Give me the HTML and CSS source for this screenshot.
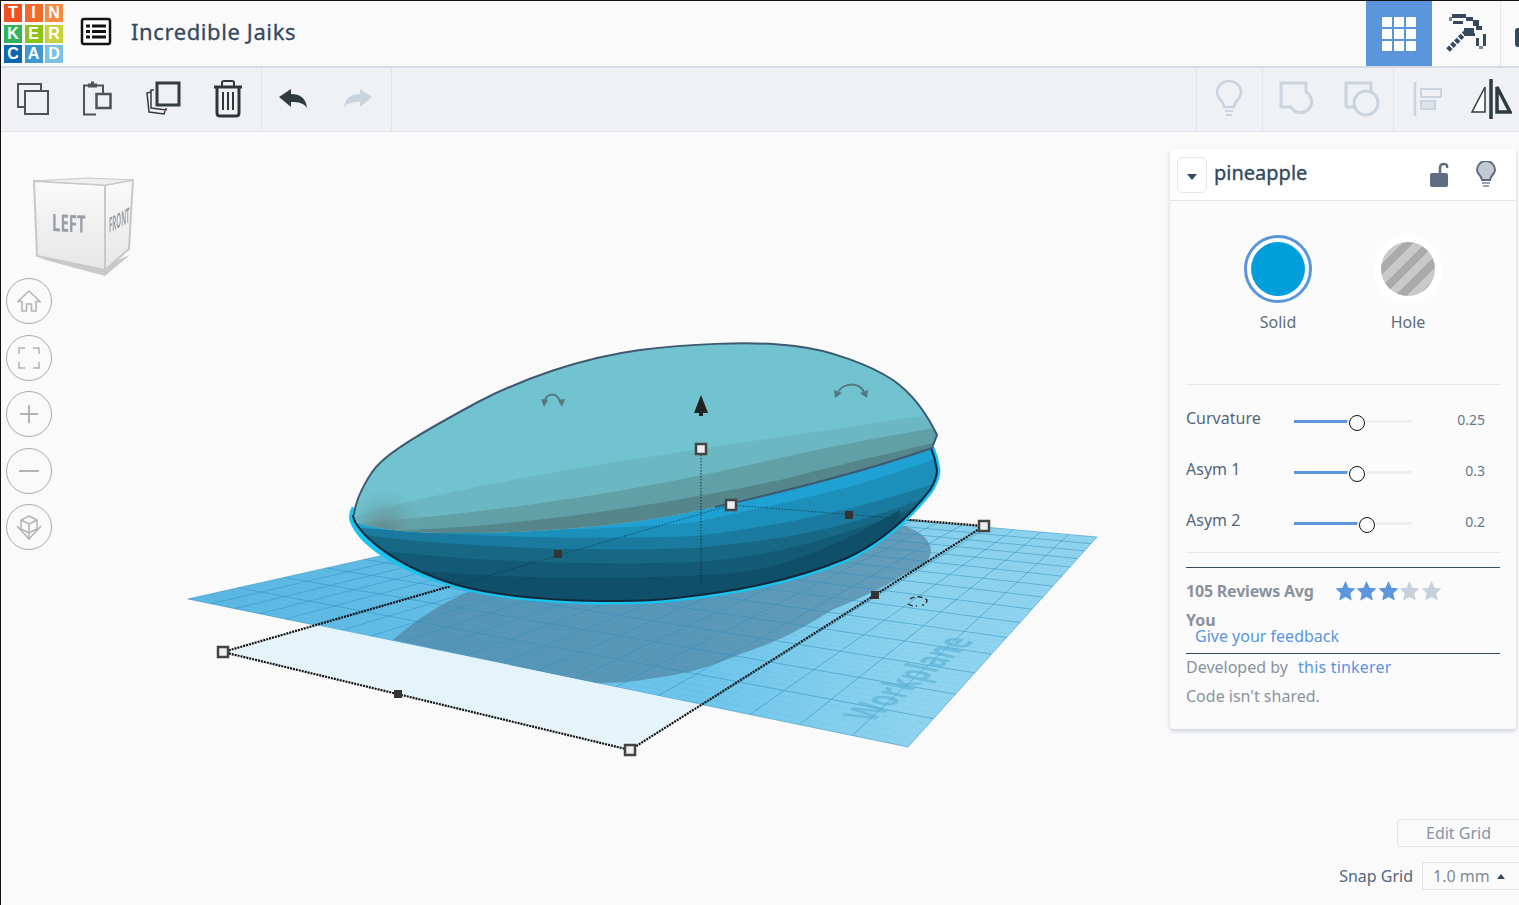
FILE: index.html
```html
<!DOCTYPE html>
<html lang="en">
<head>
	<meta charset="UTF-8">
	<title>Incredible Jaiks</title>
	<link rel="stylesheet" href="styles.css">
</head>
<body>
	<header class="topbar">
		<div class="logo">
			<span class="t1">T</span><span class="t2">I</span><span class="t3">N</span>
			<span class="t4">K</span><span class="t5">E</span><span class="t6">R</span>
			<span class="t7">C</span><span class="t8">A</span><span class="t9">D</span>
		</div>
		<svg class="listIcon" width="32" height="30" viewBox="0 0 32 30">
			<rect x="2" y="2" width="28" height="25" rx="2" fill="#fff" stroke="#111" stroke-width="2.5"/>
			<path d="M6 9h4M6 14.500h4M6 20h4M12 9h14M12 14.500h14M12 20h14" stroke="#111" stroke-width="3" fill="none"/>
		</svg>
		<h1 class="title">Incredible Jaiks</h1>
		<div class="topRight">
			<div class="gridTile">
				<svg width="34" height="34" viewBox="0 0 34 34" fill="#fff">
					<rect width="10" height="10" rx="1"/><rect x="12" width="10" height="10"/><rect x="24" width="10" height="10" rx="1"/>
					<rect y="12" width="10" height="10"/><rect x="12" y="12" width="10" height="10"/><rect x="24" y="12" width="10" height="10"/>
					<rect y="24" width="10" height="10" rx="1"/><rect x="12" y="24" width="10" height="10"/><rect x="24" y="24" width="10" height="10" rx="1"/>
				</svg>
			</div>
			<div class="pickTile">
				<svg width="60" height="55" viewBox="0 0 60 55" fill="#34495e">
					<rect x="13" y="8" width="14" height="4"/><rect x="10" y="11" width="3" height="4" fill="#7b8a9a"/>
					<rect x="14" y="15" width="10" height="3"/><rect x="27" y="11" width="7" height="4"/>
					<rect x="34" y="14" width="6" height="6"/><rect x="37" y="20" width="6" height="4"/>
					<rect x="44" y="28" width="3" height="12"/><rect x="37" y="32" width="3" height="8"/>
					<rect x="40" y="40" width="4" height="3" fill="#7b8a9a"/>
					<rect x="25" y="22" width="10" height="8"/><rect x="32" y="27" width="4" height="3"/>
					<path d="M9 44L27 26" stroke="#34495e" stroke-width="5" stroke-dasharray="4 1.500" fill="none"/>
				</svg>
			</div>
			<div class="edgeIcon"></div>
		</div>
	</header>

	<nav class="toolbar">
		<div class="toolGroup nudge">
			<button class="tool">
				<svg width="34" height="34" viewBox="0 0 34 34" fill="none" stroke="#4b5559" stroke-width="2">
					<path d="M25 9V2H2v23h7"/><rect x="9" y="9" width="23" height="23"/>
				</svg>
			</button>
			<button class="tool">
				<svg width="34" height="36" viewBox="0 0 34 36" fill="none" stroke="#4b5559" stroke-width="2">
					<path d="M15 33.500H3V4.500h4M16 4.500h6V12"/><path d="M7 2.500h3v-2h3v2h3v4H7z" fill="#4b5559" stroke="none"/><rect x="15.500" y="13" width="14" height="14" stroke-width="2.500"/>
				</svg>
			</button>
			<button class="tool">
				<svg width="38" height="38" viewBox="0 0 38 38" fill="none" stroke="#333c40">
					<rect x="13" y="3" width="22" height="22" stroke-width="3"/>
					<path d="M10 10H7v18l15 2v-2M7 12l-4 1 2 19 15 2 1-3" stroke-width="1.500"/>
				</svg>
			</button>
			<button class="tool">
				<svg width="30" height="38" viewBox="0 0 30 38" fill="none" stroke="#2f373b" stroke-width="2.500">
					<path d="M1 7h28" stroke-width="3"/><path d="M9 6V3q0-2 2-2h8q2 0 2 2v3" stroke-width="2"/>
					<path d="M4 7v26q0 3 3 3h16q3 0 3-3V7" stroke-width="3"/><path d="M10 12v18M15 12v18M20 12v18" stroke-width="2"/>
				</svg>
			</button>
		</div>
		<div class="toolGroup nudge narrow">
			<button class="tool">
				<svg width="30" height="20" viewBox="0 0 30 20"><path d="M1 8L13 0v5c9 0 15 4 16 14-3-5-8-6-16-6v5z" fill="#2f3c40"/></svg>
			</button>
			<button class="tool">
				<svg width="30" height="20" viewBox="0 0 30 20"><path d="M29 8L17 0v5C8 5 2 9 1 19c3-5 8-6 16-6v5z" fill="#c9d4de"/></svg>
			</button>
		</div>
		<div class="toolGroup groupRight">
			<button class="tool nudge1">
				<svg width="28" height="38" viewBox="0 0 28 38" fill="none" stroke="#c9d4de" stroke-width="2.500">
					<path d="M9 27c0-6-7-8-7-15a12 11 0 0 1 24 0c0 7-7 9-7 15z"/><path d="M10 31h8M11 35h6" stroke-width="2"/>
				</svg>
			</button>
		</div>
		<div class="toolGroup">
			<button class="tool">
				<svg class="shift1" width="36" height="36" viewBox="0 0 36 36" fill="none" stroke="#c9d4de" stroke-width="3">
					<path d="M2 26V2h25v9a11 11 0 1 1-15 15z"/>
				</svg>
			</button>
			<button class="tool">
				<svg class="shift1" width="36" height="36" viewBox="0 0 36 36" fill="none" stroke="#c9d4de" stroke-width="3">
					<path d="M2 26V2h25v9M12 26H2"/><circle cx="22" cy="22" r="12"/>
				</svg>
			</button>
		</div>
		<div class="toolGroup noLine">
			<button class="tool">
				<svg class="shift1" width="30" height="36" viewBox="0 0 30 36" fill="none" stroke="#c9d4de" stroke-width="2">
					<path d="M2 1v34" stroke-width="2.500"/><rect x="8" y="8" width="20" height="8"/><rect x="8" y="20" width="14" height="8" fill="#dbe2e9"/>
				</svg>
			</button>
			<button class="tool nudge1">
				<svg width="42" height="42" viewBox="0 0 42 42" fill="none" stroke="#2f3c40">
					<path d="M21 1v40" stroke-width="3.500"/><path d="M15 9v25H2z" stroke-width="1.500" fill="#fff"/><path d="M27 9v25h13z" stroke-width="3.500"/>
				</svg>
			</button>
		</div>
	</nav>

	<main class="canvas">
		<svg class="scene" viewBox="1 132 1518 772" width="1518" height="772">
			<defs>
				<linearGradient id="plate" x1="0" y1="0" x2="1" y2="0">
					<stop offset="0" stop-color="#5db9e4"/>
					<stop offset="0.55" stop-color="#6cc4ea"/>
					<stop offset="0.8" stop-color="#8ed4ef"/>
					<stop offset="1" stop-color="#93d6f0"/>
				</linearGradient>
				<linearGradient id="cubeLeft" x1="0" y1="0" x2="0" y2="1">
					<stop offset="0" stop-color="#fafafa"/>
					<stop offset="1" stop-color="#e6e6e6"/>
				</linearGradient>
				<radialGradient id="tip">
					<stop offset="0" stop-color="#5f8a8c"/>
					<stop offset="0.35" stop-color="#66979a" stop-opacity="0.7"/>
					<stop offset="1" stop-color="#6aa9b2" stop-opacity="0"/>
				</radialGradient>
				<clipPath id="clipTop">
					<path d="M354 515C356 495 372 470 380 463C395 448 430 428 478 402C520 380 580 358 640 350C680 345 750 340 795 346C830 350 870 365 893 380C910 392 925 410 937 435L932 448C880 466 800 488 715 507C670 517 625 524 577 528C540 531 500 533 457 533C420 533 385 531 357 523Z"/>
				</clipPath>
				<clipPath id="clipLow">
					<path d="M353 515C354 530 390 565 457 585C500 597 560 601 617 601C640 601 660 600 676 598C730 592 790 582 847 558C875 545 905 522 930 490C935 482 937 476 937 470C936 463 934 455 931 448L600 500Z"/>
				</clipPath>
			</defs>

			<!-- workplane -->
			<polygon points="188,599 643,497 1097,537 908,747" fill="url(#plate)"/>
			<path d="M393 640C415 620 440 605 465 593L905 526C925 533 934 545 930 556C925 568 915 570 905 574C880 590 855 600 832 610C800 630 775 643 743 653C715 665 685 675 654 678C635 682 615 683 595 683Z" fill="#4f7a96" opacity="0.6"/>
			<g id="gridLines"></g>
			<text class="plateText" transform="matrix(0.63,-0.5,1.45,0.3,873,722)">Workplane</text>

			<!-- selection box -->
			<polygon points="223,652 316,625 702,705 630,750" fill="#e5f4fa"/>
			<g fill="none" stroke="#111" stroke-dasharray="2 1" stroke-width="2.200">
				<path d="M223 652L630 750L984 526"/>
				<path d="M223 652L731 505L984 526"/>
			</g>

			<!-- shape -->
			<path d="M355 508C352 515 352 518 353 520C360 540 390 565 457 585C500 597 560 601 617 601C640 601 660 600 676 598C730 592 790 582 847 558C875 545 905 522 930 490C935 482 937 476 937 470C936 463 934 455 931 448" fill="none" stroke="#19c3ee" stroke-width="7"/>
			<g clip-path="url(#clipLow)">
				<rect x="340" y="440" width="610" height="170" fill="#1fa2d3"/>
				<path d="M340 528C450 532 600 532 696 522C780 503 847 493 945 455V610H340Z" fill="#1c8fbb"/>
				<path d="M340 526C450 537 600 540 696 536C780 525 847 513 945 480V610H340Z" fill="#1a7aa0"/>
				<path d="M340 532C450 548 600 552 696 548C780 540 847 530 945 490V610H340Z" fill="#166885"/>
				<path d="M340 545C450 562 600 566 696 562C770 558 850 535 945 495V610H340Z" fill="#125a76"/>
				<path d="M340 560C450 580 620 582 735 573C780 568 830 550 900 510V610H340Z" fill="#0f4f69"/>
			</g>
			<path d="M353 515C354 530 390 565 457 585C500 597 560 601 617 601C640 601 660 600 676 598C730 592 790 582 847 558C875 545 905 522 930 490C935 482 937 476 937 470C936 463 934 455 931 448" fill="none" stroke="#12283a" stroke-width="2"/>
			<g clip-path="url(#clipTop)">
				<rect x="340" y="330" width="610" height="210" fill="#70c3cf"/>
				<path d="M350 518C440 490 560 470 780 437C830 430 880 423 945 412V540H350Z" fill="#6bb7c2"/>
				<path d="M350 524C460 515 600 500 780 458C810 451 847 443 945 426V540H350Z" fill="#62a0a8"/>
				<path d="M370 531C460 530 600 518 780 480C810 472 847 463 945 440V540H370Z" fill="#55868c"/>
				<circle cx="385" cy="530" r="40" fill="url(#tip)"/>
			</g>
			<path d="M354 515C356 495 372 470 380 463C395 448 430 428 478 402C520 380 580 358 640 350C680 345 750 340 795 346C830 350 870 365 893 380C910 392 925 410 937 435L932 448C880 466 800 488 715 507" fill="none" stroke="#3d5a70" stroke-width="2"/>

			<!-- helpers over the shape -->
			<g fill="none" stroke="#14303f" stroke-dasharray="1.500 1.500">
				<path d="M701 449V583"/>
				<path d="M457 585L731 505L905 519" stroke-opacity="0.7"/>
			</g>
			<path d="M701 395L708 413H703V416H699V413H694Z" fill="#222"/>
			<g fill="none" stroke="#56777f" stroke-width="2">
				<path d="M544 404C545 392 558 391 561 404"/>
				<path d="M837 394C842 382 860 381 865 394"/>
				<path d="M910 599C914 596 922 596 927 600C927 603 925 605 922 605M908 604C911 606 914 606 917 606" stroke="#333" stroke-dasharray="5 3" stroke-width="1.500"/>
			</g>
			<g fill="#56777f">
				<path d="M541 399l7 1-4 7zM565 399l-7 1 4 7zM834 390l8 3-7 5zM868 390l-8 3 7 5z"/>
			</g>
			<g fill="#333">
				<rect x="554" y="550" width="8" height="8"/>
				<rect x="845" y="511" width="8" height="8"/>
				<rect x="871" y="591" width="8" height="8"/>
				<rect x="394" y="690" width="8" height="8"/>
			</g>
			<g fill="#eee" stroke="#444" stroke-width="2.500">
				<rect x="696" y="444" width="10" height="10"/>
				<rect x="726" y="500" width="10" height="10"/>
				<rect x="979" y="521" width="10" height="10"/>
				<rect x="625" y="745" width="10" height="10"/>
				<rect x="218" y="647" width="10" height="10"/>
			</g>

			<!-- view cube -->
			<polygon points="38,258 105,276 130,255 105,265" fill="#c9c9c9"/>
			<polygon points="34,181 105,185 105,270 37,256" fill="url(#cubeLeft)" stroke="#c8c8c8" stroke-width="2"/>
			<polygon points="105,185 133,180 129,249 105,270" fill="url(#cubeLeft)" stroke="#c8c8c8" stroke-width="2"/>
			<polygon points="34,181 88,178 133,180 105,185" fill="#eee" stroke="#c8c8c8"/>
			<text class="cubeText" transform="translate(52,231) skewY(3) scale(0.75,1.2)">LEFT</text>
			<text class="cubeText small" transform="translate(109,233) skewY(-28) scale(0.38,1.3)">FRONT</text>
		</svg>

		<div class="viewBtns">
			<button class="viewBtn">
				<svg width="24" height="24" viewBox="0 0 24 24" fill="none" stroke="#b3b3b3" stroke-width="1.500"><path d="M1 12.500L12 2l11 10.500h-4V22h-4.500v-7h-5v7H5v-9.500z"/></svg>
			</button>
			<button class="viewBtn">
				<svg width="22" height="22" viewBox="0 0 22 22" fill="none" stroke="#b3b3b3" stroke-width="1.500"><path d="M1 7V1h6M15 1h6v6M21 15v6h-6M7 21H1v-6"/></svg>
			</button>
			<button class="viewBtn">
				<svg width="20" height="20" viewBox="0 0 20 20" stroke="#b3b3b3" stroke-width="2"><path d="M10 1v18M1 10h18"/></svg>
			</button>
			<button class="viewBtn">
				<svg width="22" height="4" viewBox="0 0 22 4" stroke="#b3b3b3" stroke-width="2"><path d="M1 2h20"/></svg>
			</button>
			<button class="viewBtn">
				<svg width="28" height="26" viewBox="0 0 28 26" fill="none" stroke="#b3b3b3" stroke-width="1.500"><path d="M14 2l8 4v9l-8 4-8-4V6zM6 6l8 4 8-4M14 10v15M2 12l12 13 12-13"/></svg>
			</button>
		</div>

		<aside class="panel">
			<div class="panelHead">
				<button class="dropBtn"><span class="caretDown"></span></button>
				<span class="shapeName">pineapple</span>
				<svg class="lockIcon" width="20" height="26" viewBox="0 0 20 26"><path d="M11 12V6q0-4 4-4t3 4" fill="none" stroke="#5d6e80" stroke-width="2.500"/><rect x="1" y="11" width="18" height="14" rx="2" fill="#5d6e80"/></svg>
				<svg class="bulbIcon" width="22" height="28" viewBox="0 0 22 28"><path d="M7 19c0-4-5-6-5-10a9 9 0 0 1 18 0c0 4-5 6-5 10z" fill="#c3cad3" stroke="#5d6e80" stroke-width="2"/><path d="M7 22h8M8 25h6" stroke="#98a3ae" stroke-width="2"/></svg>
			</div>
			<div class="panelBody">
				<div class="modes">
					<div class="mode">
						<span class="modeRing active"><span class="modeDot solid"></span></span>
						<span class="modeName">Solid</span>
					</div>
					<div class="mode">
						<span class="modeRing"><span class="modeDot hole"></span></span>
						<span class="modeName">Hole</span>
					</div>
				</div>
				<div class="params">
					<div class="param">
						<label>Curvature</label>
						<div class="track"><div class="fill" style="width:63px"></div><span class="knob" style="left:63px"></span></div>
						<span class="paramVal">0.25</span>
					</div>
					<div class="param">
						<label>Asym 1</label>
						<div class="track"><div class="fill" style="width:63px"></div><span class="knob" style="left:63px"></span></div>
						<span class="paramVal">0.3</span>
					</div>
					<div class="param">
						<label>Asym 2</label>
						<div class="track"><div class="fill" style="width:73px"></div><span class="knob" style="left:73px"></span></div>
						<span class="paramVal">0.2</span>
					</div>
				</div>
				<div class="reviews">
					<div class="avgRow">
						<strong>105 Reviews Avg</strong>
						<span class="stars">
							<svg width="21" height="20" viewBox="0 0 20 20"><path class="on" d="M10 0l3 6.700 7 .8-5.200 4.700 1.500 7.300L10 16l-6.300 3.500 1.500-7.300L0 7.500l7-.8z"/></svg>
							<svg width="21" height="20" viewBox="0 0 20 20"><path class="on" d="M10 0l3 6.700 7 .8-5.200 4.700 1.500 7.300L10 16l-6.300 3.500 1.500-7.300L0 7.500l7-.8z"/></svg>
							<svg width="21" height="20" viewBox="0 0 20 20"><path class="on" d="M10 0l3 6.700 7 .8-5.200 4.700 1.500 7.300L10 16l-6.300 3.500 1.500-7.300L0 7.500l7-.8z"/></svg>
							<svg width="21" height="20" viewBox="0 0 20 20"><path class="off" d="M10 0l3 6.700 7 .8-5.200 4.700 1.500 7.300L10 16l-6.300 3.500 1.500-7.300L0 7.500l7-.8z"/></svg>
							<svg width="21" height="20" viewBox="0 0 20 20"><path class="off" d="M10 0l3 6.700 7 .8-5.200 4.700 1.500 7.300L10 16l-6.300 3.500 1.500-7.300L0 7.500l7-.8z"/></svg>
						</span>
					</div>
					<strong class="you">You</strong>
					<a class="feedback">Give your feedback</a>
				</div>
				<p class="dev">Developed by <a>this tinkerer</a></p>
				<p class="code">Code isn't shared.</p>
			</div>
		</aside>

		<div class="gridCtrl">
			<button class="editGrid">Edit Grid</button>
			<div class="snapRow">
				<label>Snap Grid</label>
				<div class="snapSelect">1.0 mm<span class="caretUp"></span></div>
			</div>
		</div>
	</main>

	<script src="scene.js"></script>
</body>
</html>
```

FILE: styles.css
```css
*{
	box-sizing:border-box;
}
html,body{
	height:905px;
	overflow:hidden;
}
body{
	margin:0;
	border-top:1px solid #111;
	border-left:1px solid #111;
	font-family:"Noto Sans",sans-serif;
	color:#34495e;
	background:#fafafa;
	display:flex;
	flex-direction:column;
}
button{
	font-family:inherit;
	background:none;
	border:none;
	padding:0;
}
.topbar{
	display:flex;
	align-items:center;
	height:67px;
	flex-shrink:0;
	background:#fafafa;
	border-bottom:2px solid #d6dbe5;
}
.logo{
	display:grid;
	grid-template-columns:repeat(3,18px);
	grid-auto-rows:18px;
	gap:2.5px;
	margin-left:3px;
}
.logo span{
	color:#fff;
	font-family:"Liberation Sans",sans-serif;
	font-weight:bold;
	font-size:16px;
	line-height:18px;
	text-align:center;
}
.t1{background:#f04e23;}
.t2{background:#f1692c;}
.t3{background:#f68a42;}
.t4{background:#2fb35c;}
.t5{background:#8cc414;}
.t6{background:#c8d23f;}
.t7{background:#0a68b0;}
.t8{background:#3f98cf;}
.t9{background:#7cc0e4;}
.listIcon{
	margin-left:17px;
	margin-top:-4px;
}
.title{
	margin:-6px 0 0 19px;
	font-size:22px;
	font-weight:normal;
	letter-spacing:.6px;
	color:#34495e;
	-webkit-text-stroke:.3px #34495e;
}
.topRight{
	display:flex;
	margin-left:auto;
	height:65px;
}
.gridTile{
	display:flex;
	align-items:center;
	justify-content:center;
	width:66px;
	background:#5b95db;
}
.pickTile{
	display:flex;
	align-items:center;
	justify-content:center;
	width:69px;
	padding-left:6px;
	border-right:1px solid #e4e7ec;
}
.edgeIcon{
	width:18px;
	position:relative;
}
.edgeIcon:after{
	content:'';
	position:absolute;
	top:27px;
	right:0;
	width:4px;
	height:19px;
	background:#34495e;
	border-radius:3px 0 0 3px;
}
.toolbar{
	display:flex;
	height:64px;
	flex-shrink:0;
	background:#f0f1f4;
	border-bottom:1px solid #e2e5ea;
}
.toolGroup{
	display:flex;
	height:100%;
	border-right:1px solid #e2e5ea;
}
.groupRight{
	margin-left:auto;
	border-left:1px solid #e2e5ea;
}
.noLine{
	border-right:none;
	margin-right:-5px;
}
.tool{
	display:flex;
	align-items:center;
	justify-content:center;
	width:65px;
}
.tool svg{
	margin-top:-2px;
}
.nudge .tool svg{
	margin-left:-2px;
}
.narrow .tool{
	width:64.5px;
}
.nudge1 svg{
	margin-left:-2px;
}
.shift1{
	margin-left:2px;
}
.canvas{
	position:relative;
	flex:1;
}
.scene{
	position:absolute;
	left:0;
	top:0;
	filter:blur(.35px);
}
.plateText{
	font-family:"Noto Sans",sans-serif;
	font-weight:bold;
	font-size:30px;
	fill:#58aed3;
	fill-opacity:.6;
}
.cubeText{
	font-family:"Noto Sans",sans-serif;
	font-weight:bold;
	font-size:20px;
	fill:#9a9fa5;
}
.cubeText.small{
	font-size:16px;
}
.viewBtns{
	position:absolute;
	left:5px;
	top:146px;
	display:flex;
	flex-direction:column;
	gap:10.5px;
}
.viewBtn{
	display:flex;
	align-items:center;
	justify-content:center;
	width:46px;
	height:46px;
	border:1px solid #aaa;
	border-radius:50%;
	background:#fafafa;
}
.panel{
	position:absolute;
	top:17px;
	right:3px;
	width:346px;
	height:580px;
	background:#fbfbfc;
	border-radius:4px;
	box-shadow:0 2px 4px rgba(90,110,140,.3);
}
.panelHead{
	display:flex;
	align-items:center;
	height:52px;
	padding-left:7px;
	background:#fff;
	border-bottom:1px solid #e2e5ec;
	border-radius:4px 4px 0 0;
}
.dropBtn{
	display:flex;
	align-items:center;
	justify-content:center;
	width:30px;
	height:36px;
	border:1px solid #e4e6ec;
	border-radius:6px;
	background:#fff;
}
.caretDown{
	margin-top:4px;
	border-top:6px solid #34495e;
	border-left:5px solid transparent;
	border-right:5px solid transparent;
}
.shapeName{
	margin:-4px 0 0 7px;
	font-size:20px;
	flex:1;
	-webkit-text-stroke:.35px #34495e;
}
.lockIcon{
	margin-right:26px;
}
.bulbIcon{
	margin-right:19px;
}
.panelBody{
	padding:0 16px;
}
.modes{
	display:flex;
	height:184px;
	padding:34px 0 0 57px;
	gap:60px;
	border-bottom:1px solid #e9e9e9;
}
.mode{
	display:flex;
	flex-direction:column;
	align-items:center;
	width:70px;
}
.modeRing{
	display:flex;
	align-items:center;
	justify-content:center;
	flex-shrink:0;
	width:68px;
	height:68px;
	border-radius:50%;
	background:#fff;
}
.modeRing.active{
	border:3px solid #5b95db;
}
.modeDot{
	width:54px;
	height:54px;
	border-radius:50%;
}
.solid{
	background:#009fdb;
}
.hole{
	background:repeating-linear-gradient(135deg,#aaa 0,#aaa 8px,#c9c9c9 8px,#c9c9c9 16px);
}
.modeName{
	margin-top:8px;
	font-size:16px;
	color:#5d6b7c;
}
.params{
	height:168px;
	padding-top:11px;
	border-bottom:1px solid #e9e9e9;
}
.param{
	display:flex;
	align-items:center;
	height:51px;
	font-size:16px;
	color:#54667a;
}
.param label{
	width:108px;
	margin-top:-8px;
}
.track{
	position:relative;
	width:118px;
	height:3px;
	background:#efefef;
}
.fill{
	height:3px;
	background:#5b95db;
}
.knob{
	position:absolute;
	top:-5px;
	width:16px;
	height:16px;
	margin-left:-8px;
	background:#fff;
	border:1.5px solid #111;
	border-radius:50%;
	box-shadow:0 0 0 2px #fbfbfc;
}
.paramVal{
	flex:1;
	margin-top:-5px;
	padding-right:15px;
	text-align:right;
	font-size:14px;
	color:#66768a;
}
.reviews{
	display:flex;
	flex-direction:column;
	margin-top:14px;
	height:87px;
	border-top:1px solid #34495e;
	border-bottom:1px solid #34495e;
	color:#8a929c;
	font-size:16px;
	line-height:16px;
}
.avgRow{
	display:flex;
	align-items:center;
	margin-top:13px;
	letter-spacing:-.2px;
}
.stars{
	display:flex;
	gap:.5px;
	margin-left:21px;
}
.on{
	fill:#5b95db;
}
.off{
	fill:#c7d1dc;
}
.you{
	margin-top:11px;
}
.feedback{
	margin-left:9px;
	color:#5b95db;
}
.dev,.code{
	margin:0;
	font-size:16px;
	color:#8a929c;
}
.dev{
	margin-top:2px;
}
.dev a{
	margin-left:6px;
	letter-spacing:.2px;
	color:#5b95db;
}
.code{
	margin-top:7px;
}
.gridCtrl{
	position:absolute;
	right:0;
	bottom:15px;
	display:flex;
	flex-direction:column;
	align-items:flex-end;
	gap:15px;
}
.editGrid{
	width:122px;
	height:28px;
	border:1px solid #e4e6ea;
	border-right:none;
	border-radius:4px 0 0 4px;
	font-size:16px;
	color:#8595a5;
}
.snapRow{
	display:flex;
	align-items:center;
	gap:9px;
	font-size:16px;
	color:#54667a;
}
.snapSelect{
	display:flex;
	align-items:center;
	width:97px;
	height:28px;
	padding-left:10px;
	border:1px solid #e4e6ea;
	border-right:none;
	color:#808a96;
}
.caretUp{
	margin-left:7px;
	border-bottom:5px solid #34495e;
	border-left:4px solid transparent;
	border-right:4px solid transparent;
}
```

FILE: scene.js
```js
// workplane grid, corners read off the picture
var A = [188,599], B = [908,747], C = [1097,537], D = [643,497];
var holder = document.getElementById('gridLines');

// projective map of the unit square onto A,B,C,D
function project(u,v){
	var dx1 = B[0]-C[0], dx2 = D[0]-C[0], sx = A[0]-B[0]+C[0]-D[0];
	var dy1 = B[1]-C[1], dy2 = D[1]-C[1], sy = A[1]-B[1]+C[1]-D[1];
	var det = dx1*dy2-dx2*dy1;
	var g = (sx*dy2-dx2*sy)/det;
	var h = (dx1*sy-sx*dy1)/det;
	var a = B[0]-A[0]+g*B[0], b = D[0]-A[0]+h*D[0];
	var d = B[1]-A[1]+g*B[1], e = D[1]-A[1]+h*D[1];
	var w = g*u+h*v+1;
	return [(a*u+b*v+A[0])/w,(d*u+e*v+A[1])/w];
}

function addLine(p,q,width,alpha){
	var line = document.createElementNS('http://www.w3.org/2000/svg','line');
	line.setAttribute('x1',p[0]);
	line.setAttribute('y1',p[1]);
	line.setAttribute('x2',q[0]);
	line.setAttribute('y2',q[1]);
	line.setAttribute('stroke','#2f8fbf');
	line.setAttribute('stroke-width',width);
	line.setAttribute('stroke-opacity',alpha);
	holder.appendChild(line);
}

// a strong line every 5 steps, a faint one on the others
for (var i = 0; i <= 100; i++) {
	var major = i%5 == 0;
	addLine(project(i/100,0),project(i/100,1),major ? 1 : 0.5,major ? 0.55 : 0.1);
}
for (var j = 0; j <= 75; j++) {
	var strong = j%5 == 0;
	addLine(project(0,j/75),project(1,j/75),strong ? 1 : 0.5,strong ? 0.55 : 0.1);
}
```
